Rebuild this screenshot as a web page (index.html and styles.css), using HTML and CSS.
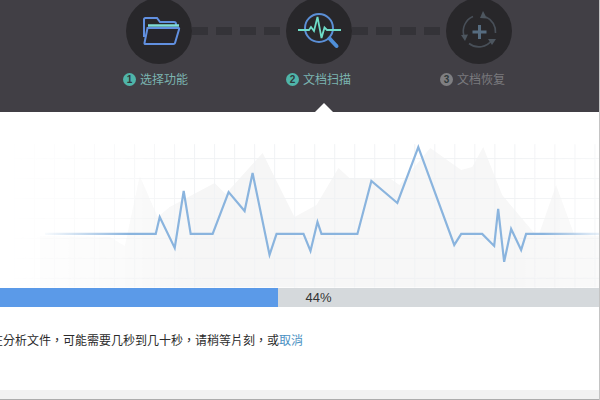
FILE: index.html
```html
<!DOCTYPE html>
<html lang="zh">
<head>
<meta charset="utf-8">
<title>文档扫描</title>
<link rel="stylesheet" href="styles.css">
</head>
<body>
<div class="page">
  <header class="steps">
    <div class="steps-grid">
      <div class="disc">
        <svg class="icon" viewBox="0 0 66 66" aria-hidden="true">
          <path d="M18 39V21.500Q18 20 19.500 20H31L34 24H48Q50 24 50 26V28" fill="none" stroke="#6190e0" stroke-width="2"/>
          <path d="M22 27.500H53" fill="none" stroke="#7fdcd6" stroke-width="2.500"/>
          <path d="M21.500 30H52.500Q53.500 30 53 31.500L49 45Q48.700 46 47.500 46H19.500Q18.300 46 18.500 45Z" fill="#26252a" stroke="#6190e0" stroke-width="2"/>
        </svg>
      </div>
      <div class="dashes"><i></i><i></i><i></i><i></i></div>
      <div class="disc">
        <svg class="icon" viewBox="0 0 66 66" aria-hidden="true">
          <circle cx="33" cy="30" r="14" fill="none" stroke="#5b8fd6" stroke-width="2"/>
          <path d="M43.500 40.500L50.500 48" fill="none" stroke="#4f8fd8" stroke-width="4" stroke-linecap="round"/>
          <path d="M12 32H23L25 29L28 33L31.500 19L35.500 40L38.500 29.500L41 32H55" fill="none" stroke="#6fdcc8" stroke-width="1.800"/>
        </svg>
      </div>
      <div class="dashes"><i></i><i></i><i></i><i></i></div>
      <div class="disc">
        <svg class="icon" viewBox="0 0 66 66" aria-hidden="true">
          <g fill="none" stroke="#484f58" stroke-width="1.600">
            <path d="M27 18.500A16 16 0 0 0 18 38"/>
            <path d="M40 19A16 16 0 0 1 49.500 35"/>
            <path d="M46 42A16 16 0 0 1 23 45.500"/>
          </g>
          <g fill="#4d565f">
            <path d="M37 13L41 20.500L34 20Z"/>
            <path d="M15 37L22 36.500L19 43Z"/>
            <path d="M50 41L46 47L42 41Z"/>
          </g>
          <path d="M33.500 27V41M26.500 34H40.500" fill="none" stroke="#566c80" stroke-width="3"/>
        </svg>
      </div>
      <div class="label label-one"><span class="num">1</span>选择功能</div>
      <div class="label-gap"></div>
      <div class="label label-two"><span class="num">2</span>文档扫描</div>
      <div class="label-gap"></div>
      <div class="label label-three"><span class="num">3</span>文档恢复</div>
    </div>
    <span class="notch"></span>
  </header>

  <main class="body">
    <svg class="chart" viewBox="0 0 600 176" aria-hidden="true">
      <defs>
        <linearGradient id="edgeFade" x1="0" x2="1" y1="0" y2="0">
          <stop offset="0" stop-color="#000"/>
          <stop offset="0.08" stop-color="#333"/>
          <stop offset="0.2" stop-color="#777"/>
          <stop offset="0.34" stop-color="#fff"/>
          <stop offset="0.85" stop-color="#fff"/>
          <stop offset="1" stop-color="#aaa"/>
        </linearGradient>
        <mask id="fade" maskUnits="userSpaceOnUse" x="0" y="0" width="600" height="176">
          <rect width="600" height="176" fill="url(#edgeFade)"/>
        </mask>
        <linearGradient id="line" gradientUnits="userSpaceOnUse" x1="40" y1="0" x2="600" y2="0">
          <stop offset="0" stop-color="#8ab4de" stop-opacity="0"/>
          <stop offset="0.16" stop-color="#8ab4de" stop-opacity="1"/>
          <stop offset="0.9" stop-color="#8ab4de" stop-opacity="1"/>
          <stop offset="1" stop-color="#8ab4de" stop-opacity="0.2"/>
        </linearGradient>
        <pattern id="grid" patternUnits="userSpaceOnUse" x="14" y="6" width="20.050" height="20">
          <path d="M0.500 0V20M0 0.500H20.050" fill="none" stroke="#f0f2f4" stroke-width="1"/>
        </pattern>
      </defs>
      <path mask="url(#fade)" d="M40 176V124L110 125L125 134L140 64L158 105L170 95L215 71L226 82L263 41L295 105L298 176Z" fill="#f6f6f6"/>
      <path mask="url(#fade)" d="M295 176V105L317 93L339 56L350 66L390 66L400 73L431 36L462 58L473 55L484 35L503 83L536 122L540 122L557 73L575 122L600 124V176Z" fill="#f7f7f7"/>
      <rect mask="url(#fade)" x="14" y="32" width="586" height="144" fill="url(#grid)"/>
      <path d="M45 122H156L160 105L175 136L184 79L191 122H213L229 80L245 99L253 61L270 143L277 122H304L311 139L318 110L322 122H358L372 69L398 91L419 35L455 133L462 122H483L495 134L499 97L505 150L512 117L522 138L527 122H600" fill="none" stroke="url(#line)" stroke-width="2.200"/>
    </svg>
    <div class="bar">
      <div class="bar-fill"></div>
      <div class="bar-text">44%</div>
    </div>
    <p class="msg" lang="zh-Hant">正在分析文件，可能需要几秒到几十秒，请稍等片刻，或<a class="cancel" href="#">取消</a></p>
  </main>
  <footer class="foot"></footer>
</div>
</body>
</html>
```
FILE: styles.css
```css
* { box-sizing: border-box; }
html, body { margin: 0; height: 100%; }
body { background: #fff; overflow: hidden; font-family: "Noto Sans CJK SC", "Liberation Sans", sans-serif; }
.page { width: 600px; height: 400px; display: flex; flex-direction: column; overflow: hidden; border-right: 1px solid #c4c4c4; }

.steps { position: relative; height: 112px; flex: none; background: #413f45; overflow: hidden; }
.steps-grid { display: grid; grid-template-columns: 66px 94px 66px 94px 66px; grid-template-rows: 66px auto; row-gap: 8px; margin: -2px 0 0 126px; }
.disc { width: 66px; height: 66px; border-radius: 50%; background: #28272a; }
.icon { display: block; width: 66px; height: 66px; }
.dashes { display: flex; gap: 8px; align-items: center; height: 66px; }
.dashes i { display: block; width: 16px; height: 8px; background: #343338; }

.label { justify-self: center; display: flex; align-items: center; white-space: nowrap; font-size: 12px; line-height: 14px; color: #7cb5b1; }
.label-one { margin-right: 7px; }
.label-two { margin-right: 1px; }
.label-three { margin-right: 13px; color: #7a7a7e; }
.num { width: 13px; height: 13px; margin-right: 4px; border-radius: 50%; background: #4fb5a9; color: #2f3a3c; font: bold 10px/13px "Liberation Sans", sans-serif; text-align: center; }
.label-three .num { background: #7f7f82; }

.notch { position: absolute; left: 315px; bottom: 0; width: 0; height: 0; border-left: 9px solid transparent; border-right: 9px solid transparent; border-bottom: 9px solid #fff; }

.body { flex: 1; min-height: 0; }
.chart { display: block; width: 599px; height: 176px; }
.bar { display: flex; height: 19px; background: #d5d9dc; }
.bar-fill { width: 278px; background: #5b9ae8; }
.bar-text { flex: 1; text-align: center; font: 13px/20px "Liberation Sans", sans-serif; color: #333; margin-right: 240px; }
.msg { margin: 24px 0 0 -21px; font-family: "Noto Sans CJK TC", "Noto Sans CJK SC", sans-serif; font-size: 12px; line-height: 18px; color: #2b2b2b; white-space: nowrap; }
.cancel { color: #4a90c2; text-decoration: none; }

.foot { height: 10px; flex: none; background: #f2f2f2; border-bottom: 1px solid #adadad; }
```
